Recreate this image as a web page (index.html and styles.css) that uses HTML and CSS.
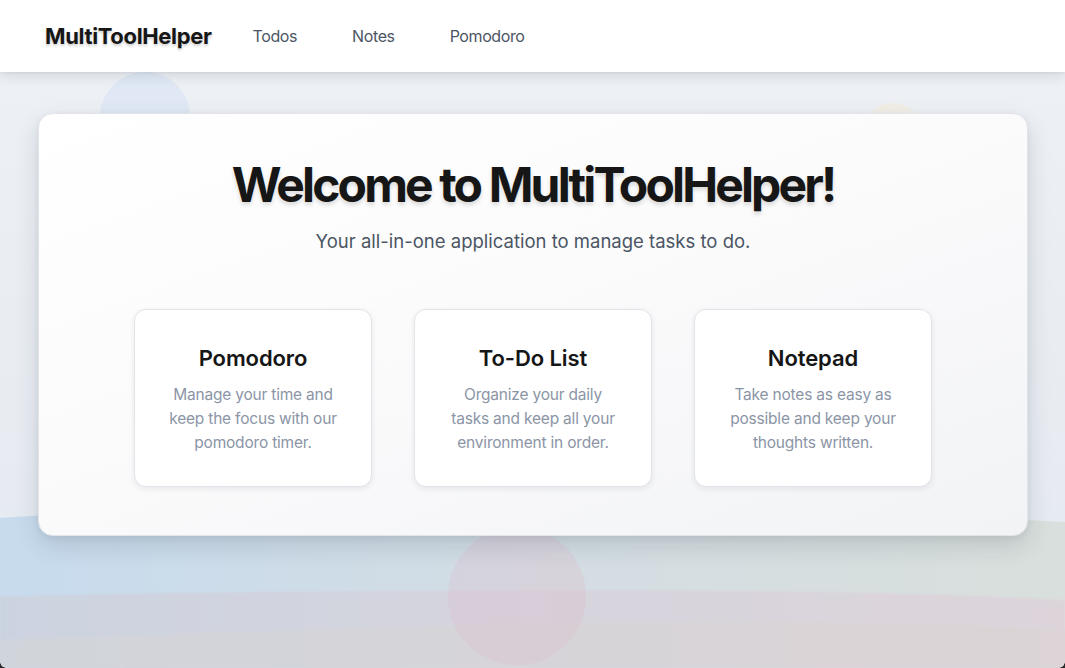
FILE: index.html
```html
<!DOCTYPE html>
<html lang="en">
<head>
<meta charset="utf-8">
<title>MultiToolHelper</title>
<link rel="stylesheet" href="styles.css">
</head>
<body>
<div class="backdrop" aria-hidden="true">
  <svg class="backdrop-svg" width="1065" height="668" viewBox="0 0 1065 668" preserveAspectRatio="none">
    <defs>
      <linearGradient id="bgTop" x1="0" y1="0" x2="0" y2="1">
        <stop offset="0" stop-color="#eef1f5"/>
        <stop offset="1" stop-color="#e4e9f0"/>
      </linearGradient>
      <linearGradient id="waveA" x1="0" y1="0" x2="1" y2="0">
        <stop offset="0" stop-color="#c7dbee"/>
        <stop offset="0.5" stop-color="#d3dde3"/>
        <stop offset="1" stop-color="#d9dfdc"/>
      </linearGradient>
      <linearGradient id="waveB" x1="0" y1="0" x2="1" y2="0">
        <stop offset="0" stop-color="#ccd3e0"/>
        <stop offset="0.5" stop-color="#d6d4de"/>
        <stop offset="1" stop-color="#ddd4da"/>
      </linearGradient>
      <linearGradient id="waveC" x1="0" y1="0" x2="1" y2="0">
        <stop offset="0" stop-color="#d3d6d9"/>
        <stop offset="1" stop-color="#dcd4d6"/>
      </linearGradient>
      <filter id="soft" x="-20%" y="-20%" width="140%" height="140%">
        <feGaussianBlur stdDeviation="1.2"/>
      </filter>
    </defs>
    <rect width="1065" height="668" fill="url(#bgTop)"/>
    <circle cx="145" cy="117" r="45" fill="#dfe8f4"/>
    <circle cx="893" cy="134" r="31" fill="#f1eee6"/>
    <path d="M0 518 C 250 500, 700 505, 1065 522 L1065 668 L0 668 Z" fill="url(#waveA)"/>
    <path d="M0 596 C 300 590, 800 585, 1065 600 L1065 668 L0 668 Z" fill="url(#waveB)" filter="url(#soft)"/>
    <path d="M0 640 C 300 630, 700 612, 1065 628 L1065 668 L0 668 Z" fill="url(#waveC)" opacity="0.7" filter="url(#soft)"/>
    <circle cx="517" cy="596" r="69" fill="#dfb6c6" opacity="0.25"/>
  </svg>
  <span class="corner corner-left"></span>
  <span class="corner corner-right"></span>
</div>

<header class="navbar">
  <a class="logo" href="#">MultiToolHelper</a>
  <nav class="nav-links">
    <a href="#">Todos</a>
    <a href="#">Notes</a>
    <a href="#">Pomodoro</a>
  </nav>
</header>

<main class="main">
  <section class="hero">
    <h1 class="hero-title">Welcome to MultiToolHelper!</h1>
    <p class="hero-sub">Your all-in-one application to manage tasks to do.</p>
    <div class="features">
      <article class="feature">
        <h2 class="feature-title">Pomodoro</h2>
        <p class="feature-text">Manage your time and keep the focus with our pomodoro timer.</p>
      </article>
      <article class="feature">
        <h2 class="feature-title">To-Do List</h2>
        <p class="feature-text">Organize your daily tasks and keep all your environment in order.</p>
      </article>
      <article class="feature">
        <h2 class="feature-title">Notepad</h2>
        <p class="feature-text">Take notes as easy as possible and keep your thoughts written.</p>
      </article>
    </div>
  </section>
</main>
</body>
</html>
```

FILE: styles.css
```css
* { box-sizing: border-box; }

html, body {
  margin: 0;
  padding: 0;
  width: 1065px;
  height: 668px;
  overflow: hidden;
}

body {
  font-family: Inter, "Noto Sans", "Liberation Sans", sans-serif;
  color: #171717;
  position: relative;
  background: #eef1f5;
}

.backdrop {
  position: absolute;
  inset: 0;
  z-index: 0;
  pointer-events: none;
}

.backdrop-svg {
  display: block;
}

.corner {
  position: absolute;
  bottom: 0;
  width: 6px;
  height: 6px;
}

.corner-left {
  left: 0;
  background: radial-gradient(circle at 6px 0, transparent 5.5px, #2b2b2b 6px);
}

.corner-right {
  right: 0;
  background: radial-gradient(circle at 0 0, transparent 5.5px, #2b2b2b 6px);
}

.navbar {
  position: relative;
  z-index: 2;
  height: 72px;
  background: #ffffff;
  display: flex;
  align-items: center;
  padding-left: 45px;
  box-shadow: 0 4px 12px rgba(15, 23, 42, 0.11), 0 1px 3px rgba(15, 23, 42, 0.06);
}

.logo {
  font-size: 22px;
  font-weight: 700;
  letter-spacing: -0.35px;
  color: #161616;
  text-decoration: none;
  text-shadow: 0 2px 3px rgba(0, 0, 0, 0.2);
}

.nav-links {
  display: flex;
  gap: 55px;
  margin-left: 41px;
}

.nav-links a {
  font-size: 16px;
  letter-spacing: -0.4px;
  color: #4b5563;
  text-decoration: none;
}

.main {
  position: relative;
  z-index: 1;
  padding: 41px 37px 0 38px;
}

.hero {
  background: linear-gradient(160deg, #ffffff 0%, #fbfbfc 45%, #f2f3f5 100%);
  border: 1px solid #e3e4ea;
  border-radius: 15px;
  box-shadow: 0 10px 24px rgba(30, 41, 59, 0.14), 0 2px 6px rgba(30, 41, 59, 0.06);
  padding: 42px 0 48px;
  text-align: center;
}

.hero-title {
  margin: 0;
  font-size: 48px;
  line-height: 58px;
  font-weight: 700;
  letter-spacing: -2.85px;
  color: #161616;
  text-shadow: 0 3px 4px rgba(0, 0, 0, 0.14);
}

.hero-sub {
  margin: 13px 0 0;
  font-size: 18.5px;
  line-height: 28px;
  color: #4b5563;
}

.features {
  display: flex;
  justify-content: center;
  gap: 42px;
  margin-top: 54px;
}

.feature {
  width: 238px;
  height: 178px;
  background: #ffffff;
  border: 1px solid #e2e3e8;
  border-radius: 12px;
  box-shadow: 0 2px 6px rgba(15, 23, 42, 0.08);
  padding: 34px 30px 0;
}

.feature-title {
  margin: 0;
  font-size: 22px;
  line-height: 28px;
  font-weight: 600;
  letter-spacing: -0.1px;
  color: #161616;
}

.feature-text {
  margin: 11px 0 0;
  font-size: 15.5px;
  line-height: 24px;
  letter-spacing: -0.2px;
  color: #8b95a6;
}
```
